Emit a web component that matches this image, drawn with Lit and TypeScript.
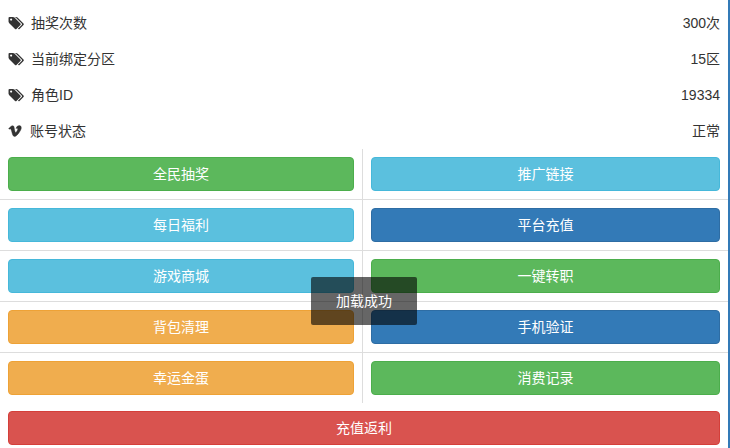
import { LitElement, html, css } from "lit";
import { customElement } from "lit/decorators.js";

const tag = html`<svg class="ic tag" viewBox="0 0 2048 1792"><path fill="currentColor" d="M512 448q0-53-37.500-90.500T384 320t-90.500 37.500T256 448t37.500 90.500T384 576t90.500-37.500T512 448zm1067 576q0 53-37 90l-491 492q-39 37-91 37-53 0-90-37L154 890q-38-37-64.500-101T63 672V256q0-52 38-90t90-38h416q53 0 117 26.500T826 219l715 714q38 39 38 91zm384 0q0 53-37 90l-491 492q-39 37-91 37-36 0-59-14t-53-45l470-470q37-37 37-90 0-52-37-91L987 219q-38-38-102-64.500T768 128h224q53 0 117 26.500T1210 219l715 714q38 39 38 91z"/></svg>`;
const vimeo = html`<svg class="ic vimeo" viewBox="0 0 1792 1792"><path fill="currentColor" stroke="currentColor" stroke-width="50" d="M1709 518q-10 236-332 651-333 431-562 431-142 0-240-263-44-160-132-482-72-262-157-262-18 0-127 76l-77-98q24-21 108-96.500t130-115.500q156-138 241-146 95-9 153 55.500t81 203.500q44 287 66 373 55 249 120 249 51 0 154-161 101-161 109-246 13-139-109-139-57 0-121 26 120-393 459-382 251 8 236 326z"/></svg>`;

const rows: [string, string, boolean][] = [
  ["抽奖次数", "300次", false],
  ["当前绑定分区", "15区", false],
  ["角色ID", "19334", false],
  ["账号状态", "正常", true],
];
const grid: [string, string, string, string][] = [
  ["全民抽奖", "success", "推广链接", "info"],
  ["每日福利", "info", "平台充值", "primary"],
  ["游戏商城", "info", "一键转职", "success"],
  ["背包清理", "warning", "手机验证", "primary"],
  ["幸运金蛋", "warning", "消费记录", "success"],
];

@customElement("app-root")
export class AppRoot extends LitElement {
  static styles = css`
    :host {
      display: block;
      position: relative;
      width: 730px;
      height: 448px;
      overflow: hidden;
      box-sizing: border-box;
      background: #fff;
      border-right: 2px solid #337ab7;
      font-family: "Liberation Sans", "Noto Sans CJK SC", sans-serif;
      font-size: 14px;
      line-height: 20px;
      color: #333;
    }
    .row {
      display: flex;
      justify-content: space-between;
      align-items: center;
      height: 36px;
      padding: 0 8px;
      box-sizing: border-box;
    }
    .row.first { margin-top: 5px; }
    .label { display: flex; align-items: center; }
    .ic { display: block; color: #333; }
    .tag { width: 16.5px; height: 14.4px; margin: 0 7px 0 -0.5px; }
    .vimeo { width: 14px; height: 14px; margin-right: 8px; }
    .grid {
      display: grid;
      grid-template-columns: 362px 1fr;
    }
    .cell {
      padding: 8px;
      border-top: 1px solid #ddd;
      height: 51px;
      box-sizing: border-box;
    }
    .cell.right { border-left: 1px solid #ddd; }
    .cell.top { border-top: 0; height: 50px; }
    .btn {
      display: flex;
      align-items: center;
      justify-content: center;
      box-sizing: border-box;
      height: 34px;
      width: 100%;
      border: 1px solid transparent;
      border-radius: 4px;
      color: #fff;
      font: inherit;
    }
    .success { background: #5cb85c; border-color: #4cae4c; }
    .info { background: #5bc0de; border-color: #46b8da; }
    .primary { background: #337ab7; border-color: #2e6da4; }
    .warning { background: #f0ad4e; border-color: #eea236; }
    .danger { background: #d9534f; border-color: #d43f3a; }
    .full { padding: 8px 8px 0; }
    .toast {
      position: absolute;
      left: 311px;
      top: 277px;
      width: 106px;
      height: 48px;
      display: flex;
      align-items: center;
      justify-content: center;
      background: rgba(0, 0, 0, 0.6);
      border-radius: 2px;
      color: #fff;
    }
  `;

  render() {
    return html`
      ${rows.map(
        ([a, b, v], i) => html`<div class="row ${i === 0 ? "first" : ""}">
          <span class="label">${v ? vimeo : tag}${a}</span><span>${b}</span>
        </div>`
      )}
      <div class="grid">
        ${grid.map(
          ([a, ac, b, bc], i) => html`
            <div class="cell ${i === 0 ? "top" : ""}"><div class="btn ${ac}">${a}</div></div>
            <div class="cell right ${i === 0 ? "top" : ""}"><div class="btn ${bc}">${b}</div></div>
          `
        )}
      </div>
      <div class="full"><div class="btn danger">充值返利</div></div>
      <div class="toast">加载成功</div>
    `;
  }
}
